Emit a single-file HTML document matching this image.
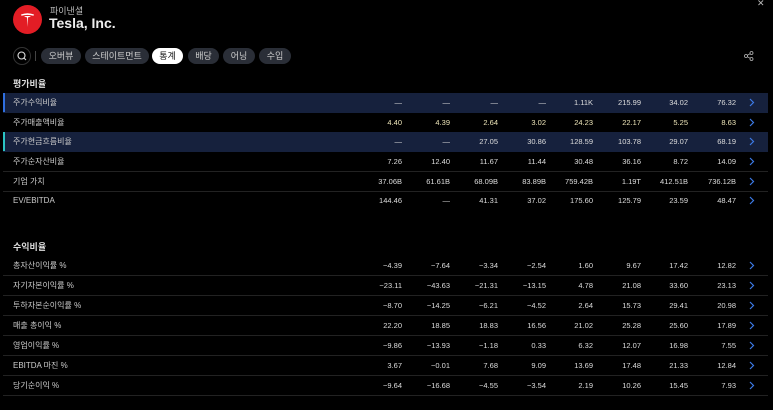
<!DOCTYPE html>
<html><head><meta charset="utf-8"><style>
*{margin:0;padding:0;box-sizing:border-box}
body{width:773px;height:410px;background:#000;color:#ddd;font-family:"Liberation Sans","Noto Sans CJK KR",sans-serif;position:relative;overflow:hidden}
.logo{position:absolute;left:13px;top:5px;width:29px;height:29px;border-radius:50%;background:#e31d25}
.sub{position:absolute;left:50px;top:4px;font-size:9px;color:#bbb}
.title{position:absolute;left:49px;top:15px;font-size:14px;font-weight:bold;color:#eee}
.x{position:absolute;left:757px;top:-2px;font-size:9px;color:#bbb}
.search{position:absolute;left:13px;top:47px;width:18px;height:18px;border-radius:50%;border:1px solid #333}
.vbar{position:absolute;left:35px;top:51px;width:1px;height:10px;background:#444}
.tab{position:absolute;top:48px;height:16px;border-radius:8px;background:#2a2e37;color:#ccc;font-size:9px;line-height:16px;text-align:center}
.tab.on{background:#fff;color:#111}
h3{position:absolute;left:13px;font-size:9px;font-weight:bold;color:#ddd}
.row{position:absolute;left:3px;width:765px;height:20px;font-size:7.5px;line-height:19px}
.row.sep{border-bottom:1px solid #222}
.row.hl{background:#16213d}
.row .bar{position:absolute;left:0;top:0;width:2px;height:19px}
.row .lab{position:absolute;left:10px;color:#ccc;font-size:8px}
.row span.v{position:absolute;text-align:right;width:50px}
.chev{position:absolute;left:746px;top:5px;width:6px;height:9px}
</style></head><body>
<div class="logo"><svg width="29" height="29" viewBox="0 0 29 29"><path d="M8 9.5 Q14.5 7 21 9.5 L20.5 10.7 Q14.5 9 8.5 10.7Z" fill="#fff"/><path d="M11 11 L18 11 L16 12.3 L15 12.3 L14.5 22 L14 12.3 L13 12.3Z" fill="#fff"/></svg></div>
<div class="sub">파이낸셜</div>
<div class="title">Tesla, Inc.</div>
<div class="x">✕</div>
<div class="search"><svg width="16" height="16" viewBox="0 0 16 16"><circle cx="7.5" cy="7.5" r="3.5" stroke="#ddd" stroke-width="1.1" fill="none"/><path d="M10 10 L12 12" stroke="#ddd" stroke-width="1.1"/></svg></div>
<div class="vbar"></div>
<div class="tab" style="left:41px;width:40px">오버뷰</div>
<div class="tab" style="left:85px;width:64px">스테이트먼트</div>
<div class="tab on" style="left:152px;width:31px">통계</div>
<div class="tab" style="left:188px;width:31px">배당</div>
<div class="tab" style="left:223px;width:32px">어닝</div>
<div class="tab" style="left:259px;width:32px">수입</div>
<svg style="position:absolute;left:744px;top:51px" width="10" height="10" viewBox="0 0 10 10"><circle cx="2" cy="5" r="1.5" stroke="#bbb" fill="none" stroke-width=".8"/><circle cx="7.5" cy="2" r="1.5" stroke="#bbb" fill="none" stroke-width=".8"/><circle cx="7.5" cy="8" r="1.5" stroke="#bbb" fill="none" stroke-width=".8"/><path d="M3.3 4.3L6.2 2.7M3.3 5.7L6.2 7.3" stroke="#bbb" stroke-width=".8"/></svg>
<h3 style="top:77px">평가비율</h3>
<h3 style="top:240px">수익비율</h3>
<div id="t"></div>
<script>
const cols=[402,450,498,546,593,641,688,736];
const A=[
["주가수익비율",["—","—","—","—","1.11K","215.99","34.02","76.32"],93,"hl","#2f6fe0"],
["주가매출액비율",["4.40","4.39","2.64","3.02","24.23","22.17","5.25","8.63"],113,"y"],
["주가현금흐름비율",["—","—","27.05","30.86","128.59","103.78","29.07","68.19"],132,"hl","#2bc4c4"],
["주가순자산비율",["7.26","12.40","11.67","11.44","30.48","36.16","8.72","14.09"],152,"sep"],
["기업 가치",["37.06B","61.61B","68.09B","83.89B","759.42B","1.19T","412.51B","736.12B"],172,"sep"],
["EV/EBITDA",["144.46","—","41.31","37.02","175.60","125.79","23.59","48.47"],191,""],
["총자산이익률 %",["−4.39","−7.64","−3.34","−2.54","1.60","9.67","17.42","12.82"],256,"sep"],
["자기자본이익률 %",["−23.11","−43.63","−21.31","−13.15","4.78","21.08","33.60","23.13"],276,"sep"],
["투하자본순이익률 %",["−8.70","−14.25","−6.21","−4.52","2.64","15.73","29.41","20.98"],296,"sep"],
["매출 총이익 %",["22.20","18.85","18.83","16.56","21.02","25.28","25.60","17.89"],316,"sep"],
["영업이익률 %",["−9.86","−13.93","−1.18","0.33","6.32","12.07","16.98","7.55"],336,"sep"],
["EBITDA 마진 %",["3.67","−0.01","7.68","9.09","13.69","17.48","21.33","12.84"],356,"sep"],
["당기순이익 %",["−9.64","−16.68","−4.55","−3.54","2.19","10.26","15.45","7.93"],376,"sep"]];
let h="";
for(const [l,v,y,c,b] of A){
 h+=`<div class="row ${c}" style="top:${y}px">`+(b?`<div class="bar" style="background:${b}"></div>`:"")+`<span class="lab">${l}</span>`;
 v.forEach((x,i)=>{h+=`<span class="v" style="left:${cols[i]-53}px;color:${c=='y'?'#ece4b8':'#ddd'}">${x}</span>`});
 h+=`<svg class="chev" viewBox="0 0 6 9"><path d="M1 1L4.5 4.5L1 8" stroke="#3d7be8" stroke-width="1.2" fill="none"/></svg></div>`;
}
document.getElementById("t").innerHTML=h;
</script>
</body></html>
